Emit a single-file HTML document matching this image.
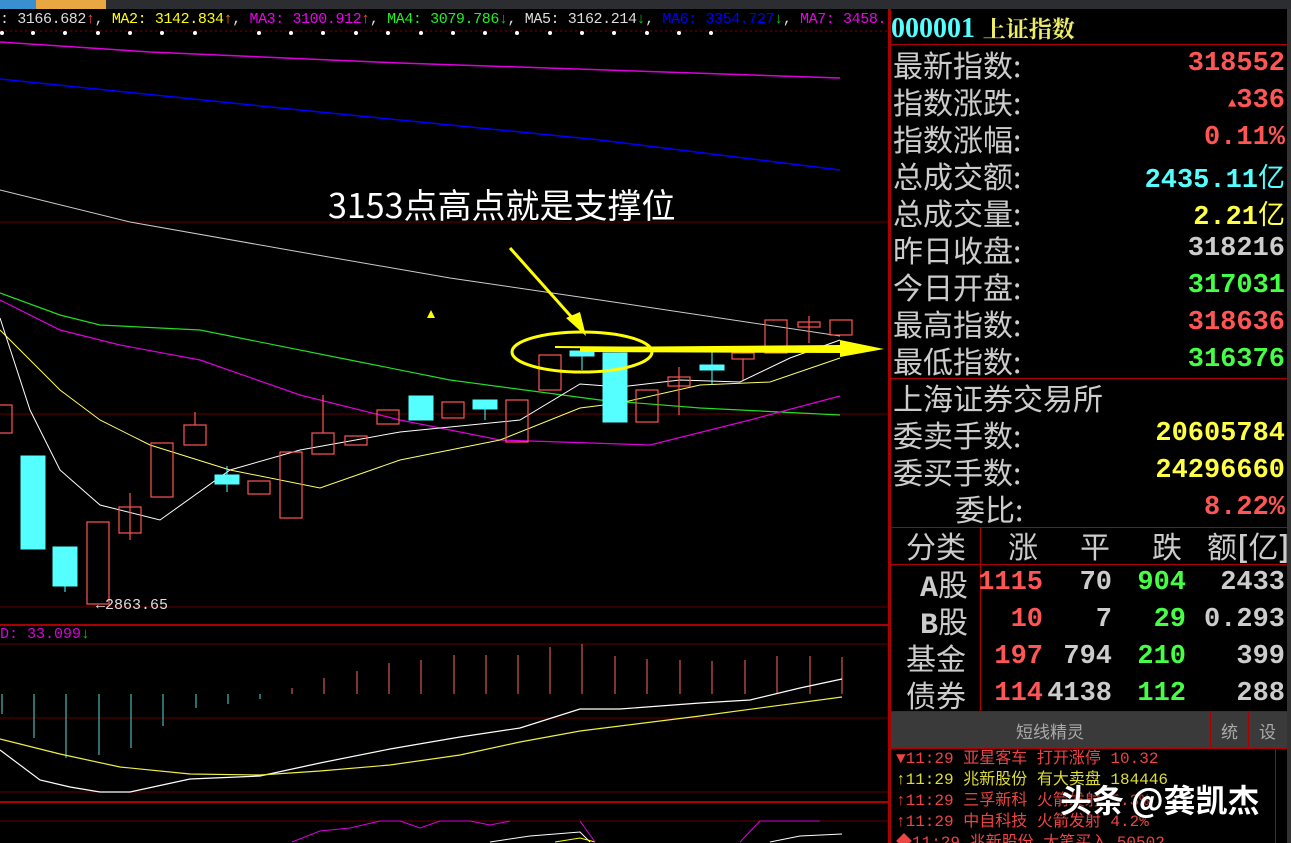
<!DOCTYPE html>
<html style="overflow:hidden"><head><meta charset="utf-8"><style>
html,body{margin:0;width:1291px;height:843px;overflow:hidden}
body{background:#000;position:relative;font-family:"Liberation Sans","Noto Sans CJK SC",sans-serif}
.t{position:absolute;white-space:nowrap}
.m{font-family:"Liberation Mono","Noto Sans CJK SC",monospace}
.lab{position:absolute;left:893px;color:#ccc;font-size:30px;font-family:"Noto Sans CJK SC",sans-serif;line-height:37px}
.val{position:absolute;right:6px;font-size:27px;font-weight:bold;line-height:37px;font-family:"Liberation Mono","Noto Sans CJK SC",monospace}
.ev{position:absolute;left:896px;font-size:16px;line-height:21px;font-family:"Liberation Mono","Noto Sans CJK SC",monospace}
</style></head><body>
<div style="position:absolute;left:0;top:0;width:1291px;height:9px;background:#2b2d30"></div>
<div style="position:absolute;left:0;top:0;width:36px;height:9px;background:#3a8fd0"></div>
<div style="position:absolute;left:36px;top:0;width:70px;height:9px;background:#e8a740"></div>
<div style="position:absolute;left:0;top:10px;width:888px;height:20px;overflow:hidden">
<div class="t m" style="left:0;top:0;font-size:15px;line-height:20px;letter-spacing:-0.4px"><span style="color:#ddd">: 3166.682</span><span style="color:#f44">↑</span><span style="color:#ddd">,</span><span style="color:#ff0"> MA2: 3142.834</span><span style="color:#f80">↑</span><span style="color:#ddd">,</span><span style="color:#e0e"> MA3: 3100.912</span><span style="color:#f44">↑</span><span style="color:#ddd">,</span><span style="color:#2e2"> MA4: 3079.786</span><span style="color:#0c0">↓</span><span style="color:#ddd">, MA5: 3162.214</span><span style="color:#0c0">↓</span><span style="color:#ddd">,</span><span style="color:#00f"> MA6: 3354.727</span><span style="color:#0c0">↓</span><span style="color:#ddd">,</span><span style="color:#e0e"> MA7: 3458.</span></div></div>
<svg style="position:absolute;left:0;top:0" width="890" height="843">
<line x1="0" y1="31" x2="890" y2="31" stroke="#800" stroke-dasharray="2 3"/>
<g fill="#fff"><circle cx="2" cy="33" r="2"/><circle cx="33" cy="33" r="2"/><circle cx="65" cy="33" r="2"/><circle cx="98" cy="33" r="2"/><circle cx="130" cy="33" r="2"/><circle cx="162" cy="33" r="2"/><circle cx="195" cy="33" r="2"/><circle cx="259" cy="33" r="2"/><circle cx="291" cy="33" r="2"/><circle cx="323" cy="33" r="2"/><circle cx="356" cy="33" r="2"/><circle cx="388" cy="33" r="2"/><circle cx="421" cy="33" r="2"/><circle cx="453" cy="33" r="2"/><circle cx="485" cy="33" r="2"/><circle cx="517" cy="33" r="2"/><circle cx="550" cy="33" r="2"/><circle cx="582" cy="33" r="2"/><circle cx="614" cy="33" r="2"/><circle cx="647" cy="33" r="2"/><circle cx="679" cy="33" r="2"/><circle cx="711" cy="33" r="2"/></g>
<g stroke="#600"><line x1="0" y1="222" x2="890" y2="222"/><line x1="0" y1="414" x2="890" y2="414"/><line x1="0" y1="607" x2="890" y2="607"/><line x1="0" y1="644" x2="890" y2="644"/><line x1="0" y1="718" x2="890" y2="718"/><line x1="0" y1="792" x2="890" y2="792"/><line x1="0" y1="821" x2="890" y2="821"/></g>
<g stroke="#a00" stroke-width="2"><line x1="0" y1="625" x2="890" y2="625"/><line x1="0" y1="802" x2="890" y2="802"/></g>
<polyline fill="none" stroke="#d0d" stroke-width="1.5" points="0,42 150,52 400,63 840,78"/>
<polyline fill="none" stroke="#00f" stroke-width="1.5" points="0,79 300,110 600,140 840,170"/>
<polyline fill="none" stroke="#ccc" stroke-width="1" points="0,190 130,222 300,252 450,278 600,300 840,336"/>
<polyline fill="none" stroke="#2d2" stroke-width="1.2" points="0,293 60,315 100,325 200,330 350,360 450,380 600,400 700,408 840,415"/>
<polyline fill="none" stroke="#d0d" stroke-width="1.2" points="0,300 60,330 120,345 200,360 300,395 400,420 500,440 650,445 750,420 840,396"/>
<polyline fill="none" stroke="#ff6" stroke-width="1" points="0,330 60,390 100,420 150,445 230,470 320,488 400,460 500,440 580,408 620,403 700,385 770,382 840,358"/>
<polyline fill="none" stroke="#fff" stroke-width="1" points="0,318 30,410 60,470 100,505 160,520 230,470 300,450 400,432 520,420 580,384 620,387 680,380 740,382 790,358 840,340"/>
<g fill="#5ff" stroke="#5ff"><rect x="21" y="456" width="24" height="93"/><rect x="53" y="547" width="24" height="39"/><rect x="215" y="475" width="24" height="9"/><line x1="227" y1="466" x2="227" y2="492"/><rect x="409" y="396" width="24" height="24"/><rect x="473" y="400" width="24" height="9"/><line x1="485" y1="409" x2="485" y2="420"/><rect x="570" y="351" width="24" height="5"/><line x1="582" y1="356" x2="582" y2="370"/><rect x="603" y="353" width="24" height="69"/><rect x="700" y="365" width="24" height="5"/><line x1="712" y1="350" x2="712" y2="385"/><line x1="65" y1="586" x2="65" y2="592"/></g>
<g fill="none" stroke="#f55" stroke-width="1.2"><rect x="-10" y="405" width="22" height="28"/><rect x="87" y="522" width="22" height="82"/><rect x="119" y="507" width="22" height="26"/><line x1="130" y1="493" x2="130" y2="540"/><rect x="151" y="443" width="22" height="54"/><rect x="184" y="425" width="22" height="20"/><line x1="195" y1="412" x2="195" y2="425"/><rect x="248" y="481" width="22" height="13"/><rect x="280" y="452" width="22" height="66"/><rect x="312" y="433" width="22" height="21"/><line x1="323" y1="395" x2="323" y2="433"/><rect x="345" y="436" width="22" height="9"/><rect x="377" y="410" width="22" height="14"/><rect x="442" y="402" width="22" height="16"/><rect x="506" y="400" width="22" height="42"/><rect x="539" y="355" width="22" height="35"/><rect x="636" y="390" width="22" height="32"/><rect x="668" y="377" width="22" height="9"/><line x1="679" y1="367" x2="679" y2="415"/><rect x="732" y="353" width="22" height="6"/><line x1="743" y1="359" x2="743" y2="380"/><rect x="765" y="320" width="22" height="33"/><rect x="798" y="322" width="22" height="5"/><line x1="809" y1="316" x2="809" y2="343"/><rect x="830" y="320" width="22" height="15"/></g>
<polygon points="427,318 431,310 435,318" fill="#ff0"/>
<line x1="555" y1="347" x2="840" y2="349" stroke="#ff0" stroke-width="2"/>
<polygon points="580,347 840,345 840,340 884,349 840,357 840,353 580,352" fill="#ff0"/>
<ellipse cx="582" cy="352" rx="70" ry="20" fill="none" stroke="#ff0" stroke-width="3"/>
<line x1="510" y1="248" x2="576" y2="322" stroke="#ff0" stroke-width="3"/>
<polygon points="566,318 586,336 580,312" fill="#ff0"/>
<g stroke="#5dd"><line x1="2" y1="694" x2="2" y2="714"/><line x1="34" y1="694" x2="34" y2="738"/><line x1="66" y1="694" x2="66" y2="758"/><line x1="99" y1="694" x2="99" y2="755"/><line x1="131" y1="694" x2="131" y2="748"/><line x1="163" y1="694" x2="163" y2="726"/><line x1="196" y1="694" x2="196" y2="708"/><line x1="228" y1="694" x2="228" y2="704"/><line x1="260" y1="694" x2="260" y2="699"/></g>
<g stroke="#f66"><line x1="292" y1="688" x2="292" y2="694"/><line x1="324" y1="678" x2="324" y2="694"/><line x1="357" y1="671" x2="357" y2="694"/><line x1="389" y1="663" x2="389" y2="694"/><line x1="421" y1="660" x2="421" y2="694"/><line x1="454" y1="655" x2="454" y2="694"/><line x1="486" y1="655" x2="486" y2="694"/><line x1="518" y1="655" x2="518" y2="694"/><line x1="550" y1="647" x2="550" y2="694"/><line x1="582" y1="644" x2="582" y2="694"/><line x1="615" y1="656" x2="615" y2="694"/><line x1="647" y1="659" x2="647" y2="694"/><line x1="680" y1="660" x2="680" y2="694"/><line x1="712" y1="661" x2="712" y2="694"/><line x1="745" y1="660" x2="745" y2="694"/><line x1="777" y1="656" x2="777" y2="694"/><line x1="810" y1="656" x2="810" y2="694"/><line x1="842" y1="657" x2="842" y2="694"/></g>
<polyline fill="none" stroke="#fff" stroke-width="1.2" points="0,750 40,780 70,787 100,792 130,792 190,779 260,776 320,763 390,749 460,737 520,728 580,709 600,709 620,709 700,703 750,700 800,688 842,679"/>
<polyline fill="none" stroke="#ee4" stroke-width="1.2" points="0,739 60,754 120,767 190,774 260,775 320,771 390,765 460,755 520,742 580,731 700,716 842,697"/>
<polyline fill="none" stroke="#d0d" points="292,842 320,831 350,828 380,821 400,821 420,828 440,821 470,821 490,825 510,821"/>
<polyline fill="none" stroke="#fff" points="490,842 530,836 580,832 590,842"/>
<polyline fill="none" stroke="#ff0" points="555,842 580,838 595,842"/>
<polyline fill="none" stroke="#d0d" points="580,821 595,842"/><polyline fill="none" stroke="#d0d" points="740,842 760,821 820,821"/>
<polyline fill="none" stroke="#fff" points="770,842 800,836 842,834"/>
</svg>
<div class="t m" style="left:96px;top:597px;color:#ddd;font-size:15px">←2863.65</div>
<div class="t m" style="left:0;top:626px;font-size:15px;color:#d0d">D: 33.099<span style="color:#0c0">↓</span></div>
<div class="t" style="left:328px;top:182px;color:#fff;font-size:34px;font-family:'Noto Sans CJK SC',sans-serif;line-height:44px">3153点高点就是支撑位</div>
<div style="position:absolute;left:888px;top:9px;width:3px;height:834px;background:#a00"></div>
<div style="position:absolute;left:891px;top:44px;width:400px;height:1px;background:#a00"></div>
<div style="position:absolute;left:1287px;top:9px;width:4px;height:834px;background:#333"></div>
<div class="t" style="left:891px;top:10px;font-size:28px;font-weight:bold;line-height:36px"><span style="color:#5ff;font-family:'Liberation Serif',serif">000001</span> <span style="color:#ee6;font-size:23px;font-family:'Noto Serif CJK SC',serif">上证指数</span></div>
<div class="lab" style="top:46px">最新指数:</div><div class="val" style="top:46px;color:#f55">318552</div>
<div class="lab" style="top:83px">指数涨跌:</div><div class="val" style="top:83px;color:#f55"><span style="font-size:14px">▲</span>336</div>
<div class="lab" style="top:120px">指数涨幅:</div><div class="val" style="top:120px;color:#f55">0.11%</div>
<div class="lab" style="top:157px">总成交额:</div><div class="val" style="top:157px;color:#5ff">2435.11<span style="font-weight:normal;font-family:'Noto Sans CJK SC'">亿</span></div>
<div class="lab" style="top:194px">总成交量:</div><div class="val" style="top:194px;color:#ff4">2.21<span style="font-weight:normal;font-family:'Noto Sans CJK SC'">亿</span></div>
<div class="lab" style="top:231px">昨日收盘:</div><div class="val" style="top:231px;color:#ccc">318216</div>
<div class="lab" style="top:268px">今日开盘:</div><div class="val" style="top:268px;color:#4f4">317031</div>
<div class="lab" style="top:305px">最高指数:</div><div class="val" style="top:305px;color:#f55">318636</div>
<div class="lab" style="top:342px">最低指数:</div><div class="val" style="top:342px;color:#4f4">316376</div>
<div style="position:absolute;left:891px;top:378px;width:396px;height:1px;background:#a00"></div>
<div class="lab" style="top:379px">上海证券交易所</div>
<div class="lab" style="top:416px">委卖手数:</div><div class="val" style="top:416px;color:#ff4">20605784</div>
<div class="lab" style="top:453px">委买手数:</div><div class="val" style="top:453px;color:#ff4">24296660</div>
<div class="lab" style="top:490px;left:955px">委比:</div><div class="val" style="top:490px;color:#f55">8.22%</div>
<div style="position:absolute;left:891px;top:527px;width:396px;height:1px;background:#a00"></div>
<div style="position:absolute;left:891px;top:564px;width:396px;height:1px;background:#a00"></div>
<div style="position:absolute;left:980px;top:527px;width:1px;height:184px;background:#a00"></div>
<div class="lab" style="top:527px;left:906px">分类</div>
<div class="lab" style="top:527px;left:1008px">涨</div><div class="lab" style="top:527px;left:1080px">平</div><div class="lab" style="top:527px;left:1152px">跌</div><div class="lab" style="top:527px;left:1207px">额<span style="font-weight:bold">[</span>亿<span style="font-weight:bold">]</span></div>
<div class="lab" style="top:565px;left:920px"><b style="font-family:'Liberation Mono'">A</b>股</div>
<div class="lab" style="top:602px;left:920px"><b style="font-family:'Liberation Mono'">B</b>股</div>
<div class="lab" style="top:639px;left:906px">基金</div>
<div class="lab" style="top:676px;left:906px">债券</div>
<div class="val" style="top:565px;right:248px;color:#f55">1115</div><div class="val" style="top:565px;right:179px;color:#ccc">70</div><div class="val" style="top:565px;right:105px;color:#4f4">904</div><div class="val" style="top:565px;color:#ccc">2433</div>
<div class="val" style="top:602px;right:248px;color:#f55">10</div><div class="val" style="top:602px;right:179px;color:#ccc">7</div><div class="val" style="top:602px;right:105px;color:#4f4">29</div><div class="val" style="top:602px;color:#ccc">0.293</div>
<div class="val" style="top:639px;right:248px;color:#f55">197</div><div class="val" style="top:639px;right:179px;color:#ccc">794</div><div class="val" style="top:639px;right:105px;color:#4f4">210</div><div class="val" style="top:639px;color:#ccc">399</div>
<div class="val" style="top:676px;right:248px;color:#f55">114</div><div class="val" style="top:676px;right:179px;color:#ccc">4138</div><div class="val" style="top:676px;right:105px;color:#4f4">112</div><div class="val" style="top:676px;color:#ccc">288</div>
<div style="position:absolute;left:891px;top:711px;width:396px;height:36px;background:#3a3a3a;border-top:1px solid #a00;border-bottom:1px solid #a00"></div>
<div class="t" style="left:1016px;top:718px;color:#aaa;font-size:17px;font-family:'Noto Sans CJK SC'">短线精灵</div>
<div style="position:absolute;left:1210px;top:712px;width:1px;height:36px;background:#a00"></div>
<div style="position:absolute;left:1248px;top:712px;width:1px;height:36px;background:#a00"></div>
<div class="t" style="left:1221px;top:718px;color:#aaa;font-size:17px;font-family:'Noto Sans CJK SC'">统</div>
<div class="t" style="left:1259px;top:718px;color:#aaa;font-size:17px;font-family:'Noto Sans CJK SC'">设</div>
<div style="position:absolute;left:1275px;top:748px;width:1px;height:95px;background:#a00"></div>
<div class="ev" style="top:749px;color:#e44">▼11:29 亚星客车 打开涨停 10.32</div>
<div class="ev" style="top:770px;color:#dd3">↑11:29 兆新股份 有大卖盘 184446</div>
<div class="ev" style="top:791px;color:#e44">↑11:29 三孚新科 火箭发射 5.3%</div>
<div class="ev" style="top:812px;color:#e44">↑11:29 中自科技 火箭发射 4.2%</div>
<div class="ev" style="top:833px;color:#e44;height:10px;overflow:hidden">◆11:29 兆新股份 大笔买入 50502</div>
<div class="t" style="left:1060px;top:776px;color:#fff;font-size:32px;font-weight:bold;font-family:'Noto Sans CJK SC';text-shadow:0 0 3px #000">头条 @龚凯杰</div>
</body></html>
